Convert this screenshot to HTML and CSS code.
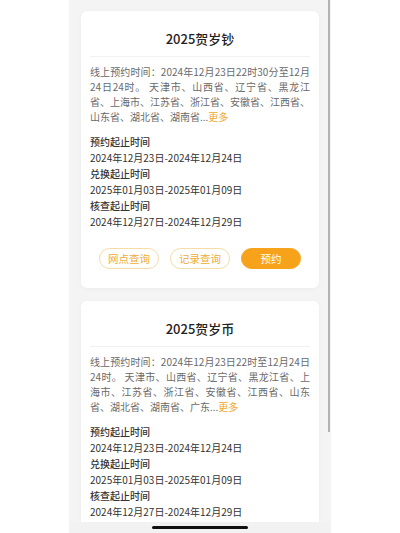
FILE: index.html
```html
<!DOCTYPE html>
<html lang="zh-CN">
<head>
<meta charset="utf-8">
<title>贺岁币预约</title>
<link rel="stylesheet" href="styles.css">
</head>
<body>
<div class="screen">
  <div class="scroll">
    <div class="card">
      <div class="title">2025贺岁钞</div>
      <p class="desc">线上预约时间：2024年12月23日22时30分至12月24日24时。 天津市、山西省、辽宁省、黑龙江省、上海市、江苏省、浙江省、安徽省、江西省、山东省、湖北省、湖南省<span class="dots">...</span><span class="more">更多</span></p>
      <div class="info">
        <div class="label">预约起止时间</div>
        <div class="value">2024年12月23日-2024年12月24日</div>
        <div class="label">兑换起止时间</div>
        <div class="value">2025年01月03日-2025年01月09日</div>
        <div class="label">核查起止时间</div>
        <div class="value">2024年12月27日-2024年12月29日</div>
      </div>
      <div class="actions">
        <span class="btn btn-outline">网点查询</span>
        <span class="btn btn-outline">记录查询</span>
        <span class="btn btn-fill">预约</span>
      </div>
    </div>
    <div class="card">
      <div class="title">2025贺岁币</div>
      <p class="desc">线上预约时间：2024年12月23日22时至12月24日24时。 天津市、山西省、辽宁省、黑龙江省、上海市、江苏省、浙江省、安徽省、江西省、山东省、湖北省、湖南省、广东<span class="dots">...</span><span class="more">更多</span></p>
      <div class="info">
        <div class="label">预约起止时间</div>
        <div class="value">2024年12月23日-2024年12月24日</div>
        <div class="label">兑换起止时间</div>
        <div class="value">2025年01月03日-2025年01月09日</div>
        <div class="label">核查起止时间</div>
        <div class="value">2024年12月27日-2024年12月29日</div>
      </div>
    </div>
  </div>
  <div class="home-bar"><span class="home-indicator"></span></div>
  <div class="scrollbar"></div>
</div>
</body>
</html>
```

FILE: styles.css
```css
html, body {
  margin: 0;
  padding: 0;
  background: #ffffff;
}
body {
  font-family: "Noto Sans CJK SC", "Noto Sans", sans-serif;
  color: #333333;
}
.screen {
  position: relative;
  margin-left: 69px;
  width: 262px;
  height: 533px;
  background: #f4f4f4;
  display: flex;
  flex-direction: column;
  overflow: hidden;
}
.scroll {
  flex: 1;
  min-height: 0;
  overflow: hidden;
  padding-top: 11px;
}
.card {
  margin: 0 12px 13px;
  background: #ffffff;
  border-radius: 6px;
  padding: 0 9px 19px;
  box-shadow: 0 1px 4px rgba(0, 0, 0, 0.04);
}
.title {
  padding: 19px 0 8px;
  line-height: 18px;
  font-size: 13px;
  font-weight: 500;
  text-align: center;
  color: #222222;
  border-bottom: 1px solid #f1f1f1;
}
.desc {
  margin: 7px 0 0;
  font-size: 10px;
  line-height: 15px;
  color: #6a6a6a;
  text-align: justify;
}
.more {
  color: #f0a732;
}
.info {
  margin-top: 10px;
  font-size: 10px;
  line-height: 16px;
}
.label {
  font-weight: 500;
  color: #333333;
}
.value {
  color: #333333;
}
.actions {
  margin-top: 18px;
  display: flex;
  justify-content: center;
  gap: 11px;
}
.btn {
  box-sizing: border-box;
  width: 60px;
  height: 21px;
  border-radius: 11px;
  font-size: 10.5px;
  line-height: 19px;
  text-align: center;
}
.btn-outline {
  border: 1px solid #f5dba5;
  color: #f0ab37;
}
.btn-fill {
  border: 1px solid #f7a21b;
  background: #f7a21b;
  color: #ffffff;
}
.home-bar {
  height: 11px;
  flex: none;
  background: #f2f2f2;
  display: flex;
  justify-content: center;
  padding-top: 4px;
  box-sizing: border-box;
}
.home-indicator {
  width: 96px;
  height: 3px;
  border-radius: 2px;
  background: #111111;
}
.scrollbar {
  position: absolute;
  top: 0;
  right: 1px;
  width: 2px;
  height: 432px;
  background: #b3b3b3;
}
```
